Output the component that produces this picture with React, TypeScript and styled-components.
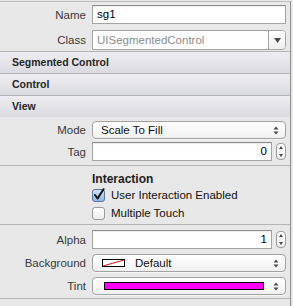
import styled, { createGlobalStyle } from "styled-components";

const GlobalStyle = createGlobalStyle`
  html, body {
    margin: 0;
    padding: 0;
    background: #e8e8e8;
  }
  body {
    font-family: "Liberation Sans", Arial, sans-serif;
    font-size: 11.5px;
    color: #000;
  }
`;

function PopupArrows() {
  return (
    <svg width="6" height="9" viewBox="0 0 6 9">
      <path d="M3 0.5 L5.5 3.5 L0.5 3.5 Z" fill="#4a4a4a" />
      <path d="M3 8.5 L5.5 5.5 L0.5 5.5 Z" fill="#4a4a4a" />
    </svg>
  );
}

function Stepper() {
  return (
    <StepperBox>
      <svg width="6" height="13" viewBox="0 0 6 13">
        <path d="M3 1 L5 4 L1 4 Z" fill="#4a4a4a" />
        <path d="M3 12 L5 9 L1 9 Z" fill="#4a4a4a" />
      </svg>
    </StepperBox>
  );
}

function CheckBox({ checked }: { checked?: boolean }) {
  return (
    <svg width="14" height="14" viewBox="0 0 14 14">
      <defs>
        <linearGradient id="cbOn" x1="0" y1="0" x2="0" y2="1">
          <stop offset="0" stopColor="#d4e4f7" />
          <stop offset="1" stopColor="#8fb3e0" />
        </linearGradient>
        <linearGradient id="cbOff" x1="0" y1="0" x2="0" y2="1">
          <stop offset="0" stopColor="#ffffff" />
          <stop offset="1" stopColor="#ececec" />
        </linearGradient>
      </defs>
      <rect
        x="0.5"
        y="1.5"
        width="12"
        height="12"
        rx="2.5"
        fill={checked ? "url(#cbOn)" : "url(#cbOff)"}
        stroke={checked ? "#5a78a0" : "#9a9a9a"}
      />
      {checked && (
        <path
          d="M3 7 L5.6 10.5 L11.5 1.2"
          fill="none"
          stroke="#111"
          strokeWidth="2"
          strokeLinecap="round"
          strokeLinejoin="round"
        />
      )}
    </svg>
  );
}

export default function App() {
  return (
    <>
      <GlobalStyle />
      <Panel>
        <Section top={3} bottom={1} gap={6}>
          <Row>
            <Label>Name</Label>
            <TextField>sg1</TextField>
          </Row>
          <Row>
            <Label>Class</Label>
            <ComboField>
              <ComboText>UISegmentedControl</ComboText>
              <ComboButton>
                <svg width="7" height="5" viewBox="0 0 7 5">
                  <path d="M0 0 L7 0 L3.5 5 Z" fill="#4a4a4a" />
                </svg>
              </ComboButton>
            </ComboField>
          </Row>
        </Section>

        <Header>Segmented Control</Header>
        <Header>Control</Header>
        <Header>View</Header>

        <Section top={4} bottom={4} gap={3}>
          <Row>
            <Label>Mode</Label>
            <Popup>
              <PopupLabel>Scale To Fill</PopupLabel>
              <PopupArrows />
            </Popup>
          </Row>
          <Row>
            <Label>Tag</Label>
            <StepRow>
              <TextField align="right">0</TextField>
              <Stepper />
            </StepRow>
          </Row>
        </Section>

        <Divider />

        <CheckGroup>
          <GroupTitle>Interaction</GroupTitle>
          <CheckRow>
            <CheckBox checked />
            <span>User Interaction Enabled</span>
          </CheckRow>
          <CheckRow>
            <CheckBox />
            <span>Multiple Touch</span>
          </CheckRow>
        </CheckGroup>

        <Divider />

        <Section top={5} bottom={3} gap={5}>
          <Row>
            <Label>Alpha</Label>
            <StepRow>
              <TextField align="right">1</TextField>
              <Stepper />
            </StepRow>
          </Row>
          <Row>
            <Label>Background</Label>
            <Popup>
              <PopupLabel>
                <DefaultSwatch>
                  <svg width="23" height="8" viewBox="0 0 23 8">
                    <rect x="0.5" y="0.5" width="22" height="7" fill="#fff" stroke="#000" />
                    <path d="M1 7 L22 1" stroke="#e01010" strokeWidth="1" />
                  </svg>
                </DefaultSwatch>
                Default
              </PopupLabel>
              <PopupArrows />
            </Popup>
          </Row>
          <Row>
            <Label>Tint</Label>
            <Popup>
              <ColorSwatch color="#ff00ff" />
              <PopupArrows />
            </Popup>
          </Row>
        </Section>

        <Divider />
      </Panel>
    </>
  );
}

const Panel = styled.div`
  width: 290px;
  margin-top: 1px;
  border-top: 1px solid #bdbdbd;
  border-right: 1px solid #8e8e8e;
  background: #e8e8e8;
  height: 304px;
`;

const Section = styled.div<{ top: number; bottom: number; gap: number }>`
  display: flex;
  flex-direction: column;
  gap: ${({ gap }) => gap}px;
  padding: ${({ top }) => top}px 4px ${({ bottom }) => bottom}px 0;
`;

const Row = styled.div`
  display: grid;
  grid-template-columns: 86px 1fr;
  column-gap: 6px;
  align-items: center;
`;

const Label = styled.div`
  text-align: right;
  color: #3a3a3a;
  white-space: nowrap;
`;

const TextField = styled.div<{ align?: string }>`
  height: 19px;
  box-sizing: border-box;
  background: #fff;
  border: 1px solid #a4a4a4;
  border-top-color: #8c8c8c;
  box-shadow: inset 0 1px 1px rgba(0, 0, 0, 0.08);
  padding: 0 4px;
  line-height: 17px;
  text-align: ${({ align }) => align || "left"};
  flex: 1;
`;

const ComboField = styled.div`
  height: 20px;
  box-sizing: border-box;
  display: flex;
  background: #fff;
  border: 1px solid #a4a4a4;
  border-radius: 0 4px 4px 0;
`;

const ComboText = styled.div`
  flex: 1;
  color: #8c8c8c;
  padding: 0 4px;
  line-height: 18px;
`;

const ComboButton = styled.div`
  width: 16px;
  border-left: 1px solid #a4a4a4;
  display: flex;
  align-items: center;
  justify-content: center;
  background: linear-gradient(#ffffff, #efefef);
  border-radius: 0 3px 3px 0;
`;

const Header = styled.div`
  height: 21px;
  border-top: 1px solid #b4b4b8;
  background: linear-gradient(#eeeef2, #dadae1);
  font-weight: bold;
  font-size: 10.5px;
  line-height: 21px;
  padding-left: 12px;
  color: #262626;
`;

const Popup = styled.div`
  height: 18px;
  box-sizing: border-box;
  border: 1px solid #a2a2a2;
  border-radius: 4px;
  background: linear-gradient(#ffffff, #f1f1f1);
  box-shadow: 0 1px 0 rgba(255, 255, 255, 0.6);
  display: flex;
  align-items: center;
  padding: 0 6px 0 8px;
  gap: 6px;
`;

const PopupLabel = styled.div`
  flex: 1;
  display: flex;
  align-items: center;
  line-height: 16px;
  color: #111;
`;

const DefaultSwatch = styled.span`
  display: flex;
  margin: 0 10px 0 1px;
`;

const ColorSwatch = styled.div<{ color: string }>`
  flex: 1;
  height: 8px;
  box-sizing: border-box;
  border: 1px solid #000;
  background: ${({ color }) => color};
  margin-left: 3px;
  margin-right: 3px;
`;

const StepRow = styled.div`
  display: flex;
  align-items: center;
  gap: 4px;
`;

const StepperBox = styled.div`
  width: 10px;
  height: 17px;
  box-sizing: border-box;
  border: 1px solid #9c9c9c;
  border-radius: 4px;
  background: linear-gradient(#ffffff, #eeeeee);
  display: flex;
  align-items: center;
  justify-content: center;
`;

const Divider = styled.div`
  height: 1px;
  background: #b4b4b4;
`;

const CheckGroup = styled.div`
  padding: 6px 0 2px 92px;
  display: flex;
  flex-direction: column;
`;

const GroupTitle = styled.div`
  font-weight: bold;
  font-size: 12px;
  line-height: 14px;
  color: #1e1e1e;
`;

const CheckRow = styled.div`
  height: 18px;
  display: flex;
  align-items: center;
  gap: 5px;
  color: #111;
  font-size: 11.5px;
`;
